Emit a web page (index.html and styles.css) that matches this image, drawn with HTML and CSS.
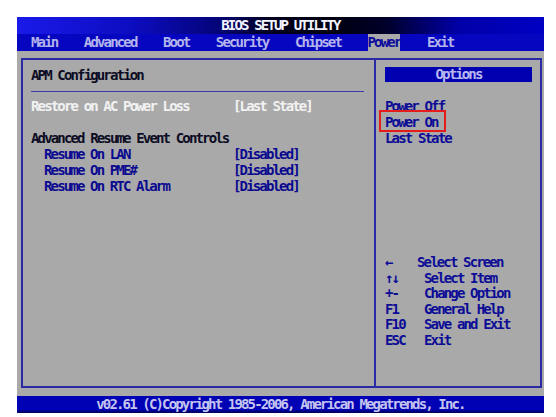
FILE: index.html
```html
<!DOCTYPE html>
<html lang="en">
<head>
<meta charset="utf-8">
<title>BIOS SETUP UTILITY</title>
<link rel="stylesheet" href="styles.css">
</head>
<body>
<div class="screen">
  <div class="titlebar">BIOS SETUP UTILITY</div>
  <nav class="menubar">
    <span class="tab">Main</span>
    <span class="tab">Advanced</span>
    <span class="tab">Boot</span>
    <span class="tab">Security</span>
    <span class="tab">Chipset</span>
    <span class="tab active">Power</span>
    <span class="tab">Exit</span>
  </nav>
  <div class="main">
    <div class="panel">
      <section class="left">
        <div class="row heading">APM Configuration</div>
        <div class="sep"></div>
        <div class="row white"><span class="label">Restore on AC Power Loss</span><span class="value">[Last State]</span></div>
        <div class="row"></div>
        <div class="row heading">Advanced Resume Event Controls</div>
        <div class="row sub"><span class="label">Resume On LAN</span><span class="value">[Disabled]</span></div>
        <div class="row sub"><span class="label">Resume On PME#</span><span class="value">[Disabled]</span></div>
        <div class="row sub"><span class="label">Resume On RTC Alarm</span><span class="value">[Disabled]</span></div>
      </section>
      <aside class="right">
        <div class="options">Options</div>
        <ul class="choices">
          <li>Power Off</li>
          <li><span class="marked">Power On</span></li>
          <li>Last State</li>
        </ul>
        <div class="help">
          <div class="hrow first"><span class="key">←</span><span class="desc">Select Screen</span></div>
          <div class="hrow"><span class="key">↑↓</span><span class="desc">Select Item</span></div>
          <div class="hrow"><span class="key">+-</span><span class="desc">Change Option</span></div>
          <div class="hrow"><span class="key">F1</span><span class="desc">General Help</span></div>
          <div class="hrow"><span class="key">F10</span><span class="desc">Save and Exit</span></div>
          <div class="hrow"><span class="key">ESC</span><span class="desc">Exit</span></div>
        </div>
      </aside>
    </div>
  </div>
  <footer class="footer">v02.61 (C)Copyright 1985-2006, American Megatrends, Inc.</footer>
</div>
</body>
</html>
```
FILE: styles.css
```css
html, body {
  margin: 0;
  padding: 0;
  background: #ffffff;
}

body {
  padding: 17px 0 0 17px;
}

.screen {
  width: 527px;
  background: #a9a9a9;
  font-family: "DejaVu Sans Mono", "Liberation Mono", monospace;
  font-weight: bold;
  font-size: 14px;
  letter-spacing: -1.85px;
  line-height: 16px;
  white-space: nowrap;
}

.titlebar {
  height: 17px;
  line-height: 17px;
  text-align: center;
  color: #f4f4ff;
  background: linear-gradient(to right, #1a1aea 0%, #0c0cc0 22%, #04047a 38%, #00001e 48%, #000010 60%, #00002a 70%, #0000a8 84%, #0000c4 100%);
}

.menubar {
  display: flex;
  gap: 26.5px;
  height: 17px;
  line-height: 17px;
  padding-left: 14px;
  background: #0606c0;
  color: #b4b4ec;
}

.tab.active {
  background: #a9a9a9;
  color: #0c0c9c;
}

.main {
  height: 345px;
  box-sizing: border-box;
  padding: 7px 2px 8px 4px;
}

.panel {
  height: 100%;
  box-sizing: border-box;
  border: 2px solid #2a2aa4;
  display: flex;
}

.left {
  width: 353px;
  border-right: 2px solid #2a2aa4;
  padding: 7px 10px 0 8px;
  box-sizing: border-box;
  flex: none;
}

.row {
  display: flex;
  height: 16px;
  color: #0a0a90;
}

.row.heading {
  color: #0c0c24;
}

.row.white {
  color: #f2f2f2;
}

.label {
  width: 202px;
  flex: none;
}

.row.sub {
  padding-left: 13px;
}

.row.sub .label {
  width: 189px;
}

.sep {
  height: 1px;
  background: #3a3aa8;
  margin: 8px 0 6px 0;
}

.right {
  flex: 1;
  display: flex;
  flex-direction: column;
  padding: 7px 8px 38px 9px;
  box-sizing: border-box;
}

.options {
  height: 15px;
  line-height: 15px;
  background: #0000b0;
  color: #b8b8ee;
  text-align: center;
}

.choices {
  list-style: none;
  margin: 16px 0 0 0;
  padding: 0;
  color: #0c0c96;
}

.choices li {
  height: 16px;
}

.marked {
  position: relative;
}

.marked::after {
  content: "";
  position: absolute;
  left: -6px;
  top: -4px;
  width: 63px;
  height: 18px;
  border: 2px solid #e41c1c;
}

.help {
  margin-top: auto;
  color: #0c0c96;
}

.hrow {
  display: flex;
  height: 15.5px;
  line-height: 15.5px;
}

.key {
  width: 39px;
  flex: none;
}

.hrow.first .key {
  width: 32px;
}

.footer {
  height: 17px;
  line-height: 16px;
  text-align: center;
  color: #c4c4ee;
  background: linear-gradient(to bottom, #0000b4 0%, #0000b4 80%, #000050 100%);
}
```
